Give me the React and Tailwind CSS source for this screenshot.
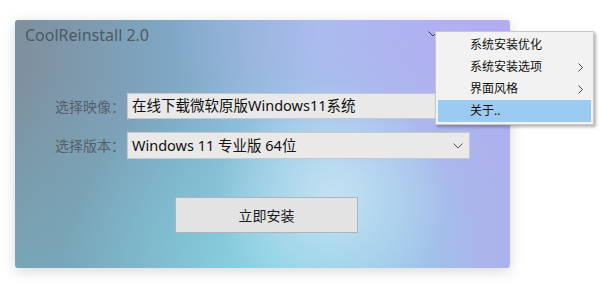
import React from "react";

const menuItems = [
  { label: "系统安装优化", sub: false },
  { label: "系统安装选项", sub: true },
  { label: "界面风格", sub: true },
  { label: "关于..", sub: false, active: true },
];

function Chevron({ className }) {
  return (
    <svg className={className} width="10" height="6" viewBox="0 0 10 6" fill="none">
      <path d="M0.5 0.5 L5 5 L9.5 0.5" stroke="currentColor" strokeWidth="1" />
    </svg>
  );
}

function App() {
  return (
    <div className="relative w-[612px] h-[306px] overflow-hidden bg-white pl-[15px] pt-[20px] font-['Noto_Sans','Noto_Sans_CJK_SC',sans-serif]">
      <div className="flex flex-col w-[495px] h-[248px] rounded-[3px] shadow-[0_3px_14px_rgba(0,0,0,0.16)] bg-[radial-gradient(circle_at_64%_72%,rgba(205,228,246,0.85),rgba(205,228,246,0)_32%),radial-gradient(ellipse_at_52%_105%,rgba(135,214,228,0.95),rgba(135,214,228,0)_58%),radial-gradient(ellipse_at_0%_100%,rgba(118,172,190,0.8),rgba(118,172,190,0)_55%),radial-gradient(ellipse_at_100%_0%,rgba(180,172,245,0.9),rgba(180,172,245,0)_50%),linear-gradient(to_right,#7e8f9d_0%,#7ea8c4_32%,#a4c6e8_62%,#acb2ec_100%)]">
        <div className="flex items-start pl-[10px] pt-[5px] pr-[7px]">
          <div className="text-[16px] leading-[20px] text-[#4d5a66]">CoolReinstall 2.0</div>
          <div className="flex-1" />
          <Chevron className="mt-[6px] text-[#3c4658]" />
          <svg className="ml-[55px] mt-[5px] text-[#5a6578]" width="10" height="10" viewBox="0 0 10 10">
            <path d="M1 1 L9 9 M9 1 L1 9" stroke="currentColor" strokeWidth="1" />
          </svg>
        </div>

        <div className="flex flex-col gap-[13px] mt-[48px] pl-[40px]">
          <div className="flex items-center">
            <div className="w-[72px] text-[14px] text-[#56606c]">选择映像：</div>
            <div className="flex items-center w-[343px] h-[26px] px-[4px] bg-[#e9e9e9] border border-[#c3c9cf] text-[14.5px] text-[#111]">
              在线下载微软原版Windows11系统
            </div>
          </div>
          <div className="flex items-center">
            <div className="w-[72px] text-[14px] text-[#56606c]">选择版本：</div>
            <div className="flex items-center justify-between w-[343px] h-[27px] pl-[4px] pr-[6px] bg-[#e9e9e9] border border-[#c3c9cf] text-[14.5px] text-[#111]">
              <span>Windows 11 专业版 64位</span>
              <Chevron className="text-[#555]" />
            </div>
          </div>
        </div>

        <button className="flex items-center justify-center ml-[160px] mt-[38px] w-[183px] h-[36px] bg-[#e3e3e3] border border-[#adb4ba] text-[14px] text-[#1a1a1a]">
          立即安装
        </button>
      </div>

      <div className="absolute left-[435px] top-[31px] w-[159px] p-[2px] bg-[#f2f2f2] border border-[#c8c8c8] shadow-[2px_2px_3px_rgba(0,0,0,0.3)]">
        {menuItems.map((item) => (
          <div
            key={item.label}
            className={
              item.active
                ? "flex items-center justify-between h-[22px] pl-[32px] pr-[8px] bg-[#9ccbf2] text-[12px] text-[#111]"
                : "flex items-center justify-between h-[22px] pl-[32px] pr-[8px] text-[12px] text-[#111]"
            }
          >
            <span>{item.label}</span>
            {item.sub && (
              <svg width="5" height="9" viewBox="0 0 5 9" fill="none" className="text-[#444]">
                <path d="M0.5 0.5 L4.5 4.5 L0.5 8.5" stroke="currentColor" strokeWidth="1" />
              </svg>
            )}
          </div>
        ))}
      </div>
    </div>
  );
}

export default App;
